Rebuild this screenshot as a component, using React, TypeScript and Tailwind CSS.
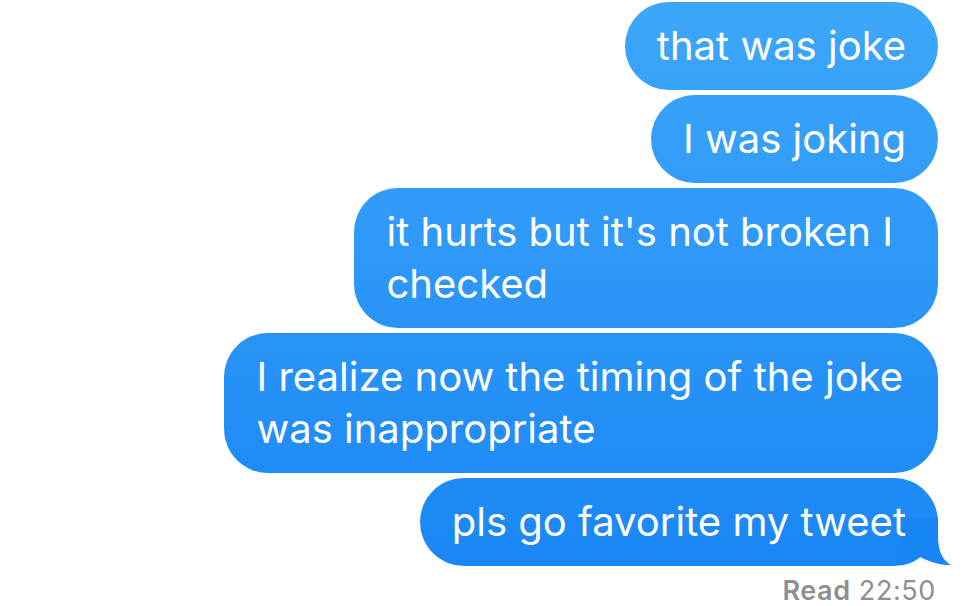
import React from "react";

const messages = [
  { lines: ["that was joke"], pad: "pr-8" },
  { lines: ["I was joking"], pad: "pr-8" },
  { lines: ["it hurts but it's not broken I", "checked"], pad: "pr-[45px]" },
  { lines: ["I realize now the timing of the joke", "was inappropriate"], pad: "pr-[35px]" },
  { lines: ["pls go favorite my tweet"], pad: "pr-8" },
];

function Tail() {
  return (
    <svg
      className="absolute -right-4 bottom-0"
      width="56"
      height="48"
      viewBox="0 0 56 48"
    >
      <path
        d="M40 0 L40 18 C40 32 44 42 53 47 C44 47.5 34 45 22 39 C16 44 8 47 0 47 L0 0 Z"
        fill="#1886f4"
      />
    </svg>
  );
}

export default function App() {
  return (
    <div
      className="w-[980px] h-[606px] bg-white flex flex-col items-end pt-[2px] pr-[42px] gap-[5px] overflow-hidden"
      style={{ fontFamily: "Inter, 'Noto Sans', sans-serif" }}
    >
      {messages.map((m, i) => (
        <div
          key={i}
          className={`relative bg-fixed bg-linear-to-b from-[#3da7fa] to-[#1684f4] text-white rounded-[44px] pl-8 py-[18px] text-[40px] leading-[52px] whitespace-nowrap ${m.pad}`}
        >
          {i === messages.length - 1 && <Tail />}
          <span className="relative">
            {m.lines.map((l, j) => (
              <React.Fragment key={j}>
                {j > 0 && <br />}
                {l}
              </React.Fragment>
            ))}
          </span>
        </div>
      ))}
      <div className="text-[27px] leading-[30px] tracking-[0.6px] text-[#8e8e93] mt-[5px] mr-[2px]">
        <span className="font-semibold">Read</span> 22:50
      </div>
    </div>
  );
}
